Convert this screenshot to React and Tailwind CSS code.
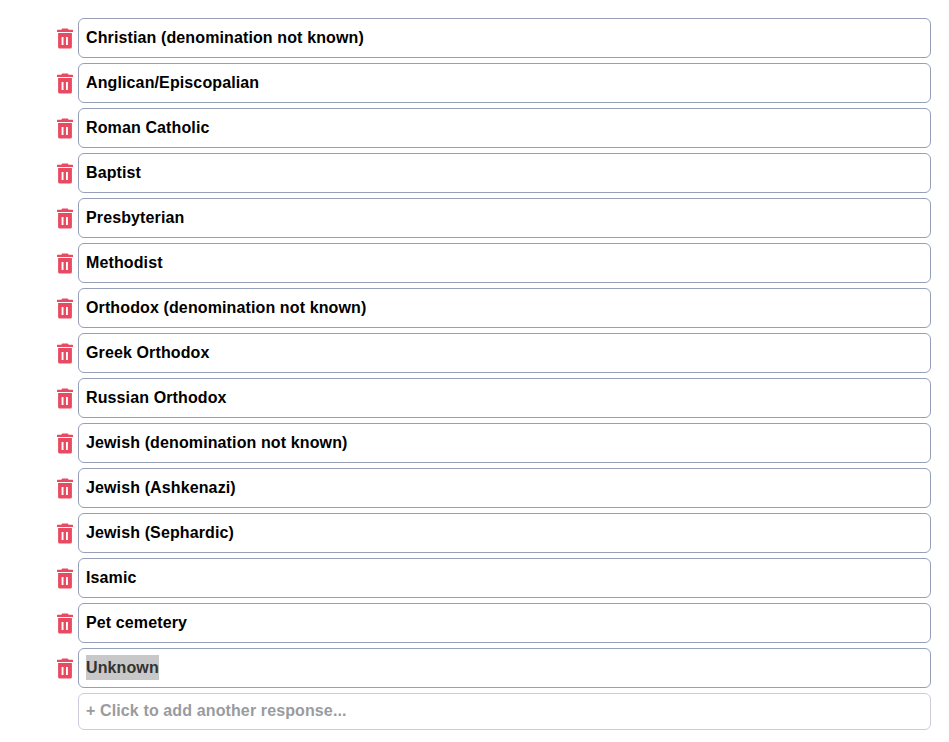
const responses = [
  'Christian (denomination not known)',
  'Anglican/Episcopalian',
  'Roman Catholic',
  'Baptist',
  'Presbyterian',
  'Methodist',
  'Orthodox (denomination not known)',
  'Greek Orthodox',
  'Russian Orthodox',
  'Jewish (denomination not known)',
  'Jewish (Ashkenazi)',
  'Jewish (Sephardic)',
  'Isamic',
  'Pet cemetery',
  'Unknown',
];

function TrashIcon() {
  return (
    <svg className="block overflow-visible" width="16" height="20" viewBox="0 0 16 20" fill="#e84a62">
      <path d="M5.2 0.5h5.6l.9 1.2h3.8a.5.5 0 0 1 .5.5V4H0V2.2a.5.5 0 0 1 .5-.5h3.8z" />
      <path fillRule="evenodd" d="M1.1 5.1h13.8v13.8a1.7 1.7 0 0 1-1.7 1.7H2.8a1.7 1.7 0 0 1-1.7-1.7zM4.6 9v8h1.9V9zM9 9v8h1.9V9z" />
    </svg>
  );
}

export default function App() {
  return (
    <main className="h-[742px] w-[949px] overflow-hidden bg-white pt-[18px] pl-[57px] pr-[18px] font-['Liberation_Sans',Arial,sans-serif] text-[16px] font-bold leading-[25px] tracking-[0.12px] text-black">
      <div className="flex flex-col gap-[5px]">
        {responses.map((label) => (
          <div key={label} className="flex h-10 items-center gap-[5px]">
            <button aria-label={`Delete ${label}`} className="w-4 shrink-0">
              <TrashIcon />
            </button>
            <div className="flex h-10 flex-1 items-start rounded-md border border-[#959fb8] px-[7px] pt-1.5">
              <span className={label === 'Unknown' ? 'block h-[25px] bg-[#c8c8c8] text-[#333]' : 'block'}>{label}</span>
            </div>
          </div>
        ))}
        <button className="ml-[21px] flex h-[37px] items-start rounded-md border border-[#cccddb] px-[7px] pt-1 text-[#999b9f]">
          + Click to add another response...
        </button>
      </div>
    </main>
  );
}
